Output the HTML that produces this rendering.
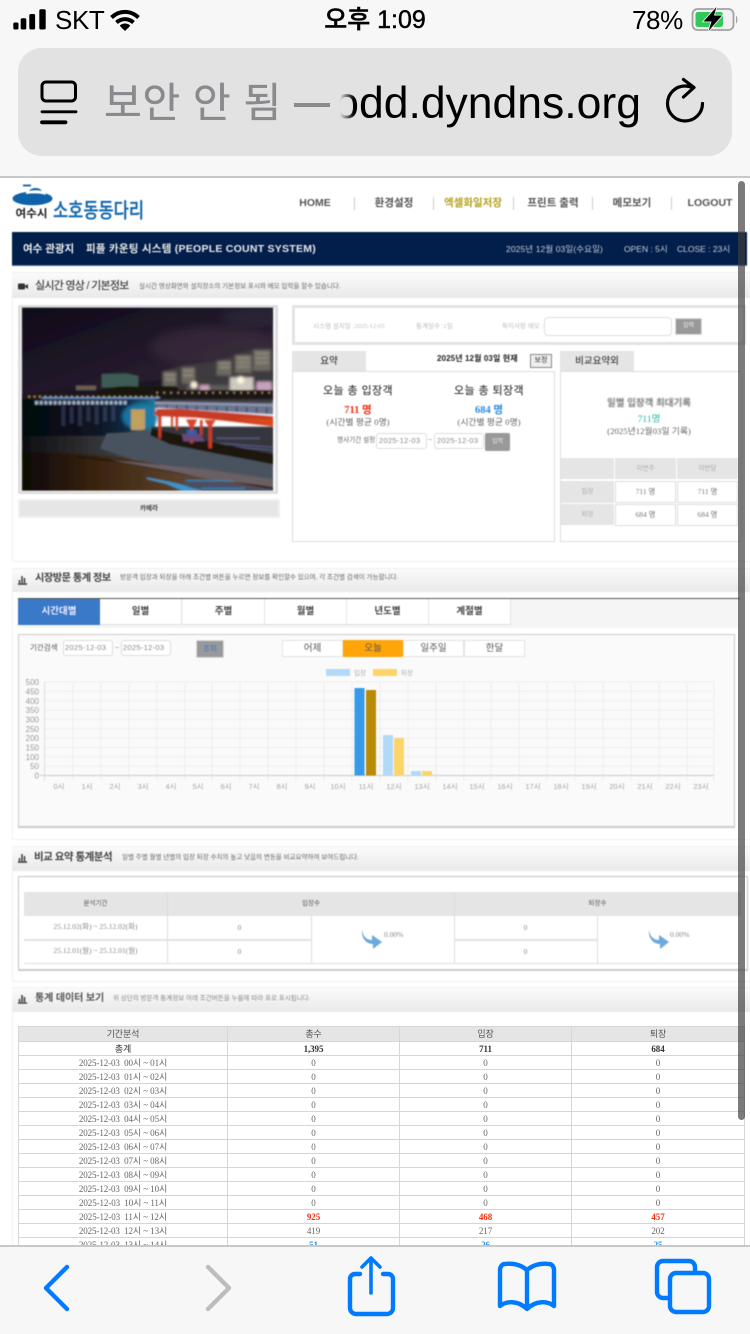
<!DOCTYPE html>
<html lang="ko"><head><meta charset="utf-8"><title>소호동동다리</title>
<style>
*{box-sizing:border-box}
html,body{margin:0;padding:0;width:750px;height:1334px;overflow:hidden;background:#fff}
body{position:relative;font-family:"Liberation Sans","Noto Sans CJK KR",sans-serif}
.a{position:absolute;white-space:nowrap}
.c{text-align:center}
.s{font-family:"Liberation Serif","Noto Sans CJK KR",serif}
#page{position:absolute;left:0;top:178px;width:750px;height:1067px;overflow:hidden;filter:blur(.4px)}
#in{position:absolute;left:0;top:-178px;width:750px;height:1334px}
.nav{top:197px;font-size:10.5px;font-weight:700;color:#555;line-height:13px;width:80px;text-align:center}
.sep{top:197px;width:1px;height:13px;background:#ccc}
.sec{left:12px;width:738px;border:1px solid #f0f0f0;border-right:0}
.hd{left:12px;width:738px;background:linear-gradient(#fbfbfb,#e9e9e9)}
.t{font-size:10.5px;font-weight:700;color:#444;line-height:14px;letter-spacing:-.5px}
.d{font-size:6.5px;color:#666;line-height:10px}
.inp{background:#fff;border:1px solid #ddd;border-radius:3px;font-size:7.5px;color:#888;line-height:13px;padding-left:2px;letter-spacing:.3px}
.g{background:#e5e5e5}
.tab{top:599px;width:82px;height:26px;background:#fff;border-right:1px solid #e3e3e3;border-bottom:1px solid #ddd;font-size:9.5px;font-weight:700;color:#444;line-height:25px;text-align:center}
.seg{top:640px;height:17px;font-size:9.5px;color:#555;line-height:16px;text-align:center;background:#fff;border:1px solid #e3e3e3}
table{border-collapse:collapse;table-layout:fixed}
#dt{position:absolute;left:18px;top:1026px;width:726px;font-family:"Liberation Serif","Noto Sans CJK KR",serif;font-size:9px;letter-spacing:-.1px;color:#666;filter:blur(.2px)}
#dt td{height:14px;padding:0;border:1px solid #d6d6d6;text-align:center;line-height:12px;overflow:hidden;white-space:nowrap}
#dt tr.h td{height:15px;background:#e5e5e5;font-size:9px;color:#555;font-family:"Liberation Sans","Noto Sans CJK KR",sans-serif}
#dt .r{color:#f03010;font-weight:700}
#dt .b{color:#2a8ade;font-weight:700}
.cell{border:1px solid #ddd;background:#fff;font-size:7.5px;color:#777;text-align:center}
</style></head><body>

<div id="page"><div id="in">
<!-- logo -->
<svg class="a" style="left:10px;top:182px" width="140" height="40" viewBox="0 0 140 40">
<ellipse cx="22.500" cy="16.500" rx="20" ry="6.800" fill="#0d62a8"/>
<path d="M16 12c0-4 6-7 11-6 4 1 8 4 9 7-6-2-13-2-20-1z" fill="#fff"/>
<path d="M19 9c3-4 10-4 13 0-4-1-9-1-13 0z" fill="#0d62a8"/>
<path d="M13 3.500h8" stroke="#0d62a8" stroke-width="1.800"/>
<text x="5.500" y="35" font-size="11" font-weight="700" fill="#222" font-family="Liberation Sans,Noto Sans CJK KR,sans-serif" textLength="32" lengthAdjust="spacingAndGlyphs">여수시</text>
<text x="43" y="35.500" font-size="20.500" font-weight="500" fill="#1268ae" stroke="#1268ae" stroke-width=".3" font-family="Liberation Sans,Noto Sans CJK KR,sans-serif" textLength="91" lengthAdjust="spacingAndGlyphs">소호동동다리</text>
</svg>
<div class="a nav" style="left:275px">HOME</div>
<div class="a nav" style="left:354px">환경설정</div>
<div class="a nav" style="left:433px;color:#b5a01e">엑셀화일저장</div>
<div class="a nav" style="left:513px">프린트 출력</div>
<div class="a nav" style="left:592px">메모보기</div>
<div class="a nav" style="left:670px">LOGOUT</div>
<div class="a sep" style="left:354px"></div><div class="a sep" style="left:433px"></div><div class="a sep" style="left:513px"></div><div class="a sep" style="left:592px"></div><div class="a sep" style="left:671px"></div>

<!-- banner -->
<div class="a" style="left:12px;top:232px;width:735px;height:34px;background:#021f4c;border-bottom:1px solid #5a7090"></div>
<div class="a" style="left:23px;top:242px;font-size:10.5px;font-weight:700;color:#f0f0f0;line-height:14px">여수 관광지</div>
<div class="a" style="left:86px;top:242px;font-size:10.5px;font-weight:700;color:#e8e8e8;line-height:14px;letter-spacing:.25px">피플 카운팅 시스템 (PEOPLE COUNT SYSTEM)</div>
<div class="a" style="left:506px;top:243px;font-size:8.500px;color:#c8ccd4;line-height:12px;letter-spacing:.1px">2025년 12월 03일(수요일)</div>
<div class="a" style="left:624px;top:243px;font-size:8.500px;color:#c8ccd4;line-height:12px">OPEN : 5시</div>
<div class="a" style="left:677px;top:243px;font-size:8.500px;color:#c8ccd4;line-height:12px">CLOSE : 23시</div>

<!-- section 1 -->
<div class="a sec" style="top:272px;height:290px"></div>
<div class="a hd" style="top:273px;height:25px"></div>
<svg class="a" style="left:18px;top:283px" width="10" height="7"><rect width="7" height="6" y=".5" rx="1" fill="#333"/><path d="M7 3l3-2v5l-3-2z" fill="#333"/></svg>
<div class="a t" style="left:35px;top:279px;font-weight:500;font-size:11px;letter-spacing:-.75px">실시간 영상 / 기본정보</div>
<div class="a d" style="left:139px;top:282px">실시간 영상화면와 설치장소의 기본정보 표시와 메모 입력을 할수 있습니다.</div>

<div class="a" style="left:18px;top:305px;width:260px;height:189px;border:3px solid #dedede;background:#fff"></div>
<svg class="a" style="left:0;top:270px" width="375" height="290" viewBox="0 0 1125 870">
<defs>
<linearGradient id="sky" x1="0" y1="0" x2="1" y2="1"><stop offset="0" stop-color="#0e0a18"/><stop offset=".55" stop-color="#241a2c"/><stop offset="1" stop-color="#3a2e3a"/></linearGradient>
<linearGradient id="sea" x1="0" y1="0" x2="1" y2="0"><stop offset="0" stop-color="#04060c"/><stop offset=".55" stop-color="#0a1422"/><stop offset=".8" stop-color="#0e2c44"/><stop offset="1" stop-color="#1e7aa0"/></linearGradient>
<linearGradient id="fore" x1="0" y1="0" x2="1" y2="0"><stop offset="0" stop-color="#0c0705"/><stop offset=".3" stop-color="#3a2410"/><stop offset=".6" stop-color="#5a3e28"/><stop offset="1" stop-color="#6a5650"/></linearGradient>
<linearGradient id="gv" x1="0" y1="0" x2="1" y2="0"><stop offset="0" stop-color="#0c0d10"/><stop offset=".45" stop-color="#2c2c2e"/><stop offset="1" stop-color="#4a525e"/></linearGradient>
<clipPath id="cp"><rect x="65" y="112" width="755" height="550"/></clipPath>
<filter id="b1"><feGaussianBlur stdDeviation="2"/></filter>
<filter id="b2"><feGaussianBlur stdDeviation="14"/></filter>
<filter id="b3"><feGaussianBlur stdDeviation="5"/></filter>
<filter id="b4"><feGaussianBlur stdDeviation="3"/></filter>
</defs>
<g clip-path="url(#cp)"><g filter="url(#b1)">
<rect x="65" y="112" width="755" height="280" fill="url(#sky)"/>
<ellipse cx="640" cy="230" rx="190" ry="60" fill="#4a3b48" opacity=".4" filter="url(#b2)"/>
<ellipse cx="770" cy="140" rx="110" ry="26" fill="#38384a" opacity=".4" filter="url(#b2)"/>
<path d="M65 372l110-14 60-10 70 12 110-24 80-8 70 0v80H65z" fill="#1a1820"/>
<rect x="228" y="347" width="60" height="13" fill="#6c5e56"/>
<g filter="url(#b4)">
<path d="M485 305l60-18 100-12 60-20 60-20h55v170H485z" fill="#3e3a3c"/>
<path d="M650 272h44v44h-44zM705 255h50v54h-50zM760 240h52v62h-52zM490 305h40v44h-40zM545 292h40v48h-40z" fill="#6e6a64"/>
<path d="M660 280h30M660 292h30M712 264h38M712 277h38M712 290h38M768 250h40M768 264h40M768 278h40M495 315h30M495 328h30M550 302h30M550 316h30" stroke="#ded4b0" stroke-width="3" stroke-dasharray="4 4"/>
<path d="M560 345h260v40H560z" fill="#5e5a5a"/>
<rect x="690" y="322" width="70" height="46" fill="#cfc8c0"/><circle cx="722" cy="330" r="11" fill="#fff8e0"/><circle cx="582" cy="345" r="10" fill="#fff2dc"/>
<path d="M600 345h28v30h-28zM770 335h45v30h-45z" fill="#c8a0bc"/>
</g>
<path d="M305 312l75-2 35 8v34h-110z" fill="#3e5c56"/>
<path d="M280 376c30-26 90-30 130-26s80-4 120 0l30 36H280z" fill="#15150e"/>
<path d="M450 360h370v28H450z" fill="#1c1812"/>
<path d="M470 368h350" stroke="#f0d080" stroke-width="5" stroke-dasharray="3 18"/>
<rect x="65" y="388" width="400" height="125" fill="url(#sea)"/>
<path d="M85 380h395" stroke="#e8b848" stroke-width="4" stroke-dasharray="5 11"/>
<path d="M125 384h355" stroke="#6a94d4" stroke-width="5"/>
<path d="M105 398h280" stroke="#c0d4f0" stroke-width="11" stroke-dasharray="9 5" opacity=".85"/>
<path d="M190 408v60M215 410v50M240 408v60M265 410v45M290 408v55M315 410v45M340 408v45" stroke="#57547a" stroke-width="12" opacity=".45"/>
<ellipse cx="420" cy="440" rx="55" ry="40" fill="#1f7fae" filter="url(#b3)" opacity=".85"/>
<rect x="393" y="418" width="42" height="62" fill="#bfa05c"/>
<rect x="65" y="498" width="400" height="70" fill="url(#gv)"/>
<path d="M455 470h365v120H455z" fill="#36363c"/>
<path d="M640 520l180 12v8l-180-14zM650 505h130" stroke="#6a70a0" stroke-width="4" opacity=".7"/>
<path d="M455 475l-5 20 60 28 150 30 160 30v-30l-170-34-135-30z" fill="#1c130c"/>
<path d="M320 490c50 0 90-5 125-15l5 20 60 28 150 30 160 30v62l-280-40-150-40-90-30z" fill="#4a525e"/>
<path d="M65 545c100 5 200 5 280 15s170 30 240 50l235 30v25H65z" fill="url(#fore)"/>
<path d="M230 560l130 15 160 30 300 50" stroke="#1a1410" stroke-width="5" fill="none"/>
<path d="M330 570l190 35 120 25 180 20v-22l-200-30z" fill="#6a5f64"/>
<path d="M550 625l270 32v8H560z" fill="#4a5060"/>
<path d="M440 622c50 10 90 15 130 30l40 10-60 2-50-22-60-15z" fill="#3b96cc"/>
<path d="M560 632h140M605 655h130" stroke="#2c84bc" stroke-width="4"/>
<path d="M465 393l355 6v34l-355-20z" fill="#6c7490"/>
<path d="M465 399l355 7" stroke="#c8d0e0" stroke-width="3" opacity=".7"/>
<path d="M470 405v10M500 405v10M530 406v12M560 406v14M590 408v14M620 408v14M650 410v14M680 410v16M710 410v16M740 412v16M770 412v18M800 412v18" stroke="#2a2c40" stroke-width="3"/>
<path d="M470 414l350 20" stroke="#c8ccda" stroke-width="2.500" opacity=".8"/>
<path d="M470 417h70l280 22v30l-230-26-120-5z" fill="#c73a20"/>
<path d="M700 445l120 2v20z" fill="#d84a1c"/>
<path d="M462 425h20v8h-20zM475 433h9v72h-9zM513 435h6v35h-6zM527 435h7v45h-7zM570 450h10v70h-10zM600 450h8v45h-8zM625 450h11v85h-11z" fill="#c93a24"/>
<path d="M558 448h34l-10 20h-14zM613 450h34l-10 16h-14z" fill="#d8442a"/>
<path d="M545 492h55l15 22h-65z" fill="#6a4a7a"/>
<path d="M560 480h30v12h-30z" fill="#2a60b0"/>
</g></g></svg>
<div class="a c" style="left:18px;top:499px;width:262px;height:19px;background:#e6e6e6;border:2px solid #f0f0f0;font-size:6.500px;font-weight:700;color:#444;line-height:15px">카메라</div>

<div class="a" style="left:292px;top:305px;width:454px;height:40px;border:3px solid #e3e3e3"></div>
<div class="a" style="left:313px;top:322px;font-size:6.500px;color:#bbb;line-height:10px">시스템 설치일 :<span class="s">2025-12-03</span></div>
<div class="a" style="left:416px;top:322px;font-size:6.500px;color:#bbb;line-height:10px">통계일수 :<span class="s">1일</span></div>
<div class="a" style="left:502px;top:322px;font-size:6.500px;color:#bbb;line-height:10px">특이사항 메모 :</div>
<div class="a" style="left:544px;top:317px;width:128px;height:19px;border:1px solid #ddd;border-radius:4px;background:#fff"></div>
<div class="a c" style="left:675px;top:318px;width:27px;height:17px;background:#999;border:1px solid #ddd;font-size:6px;color:#f0f0f0;line-height:15px">입력</div>

<div class="a c g" style="left:292px;top:351px;width:74px;height:21px;font-size:9.500px;color:#444;line-height:21px;font-weight:500">요약</div>
<div class="a" style="left:292px;top:371px;width:263px;height:171px;border:1px solid #ddd"></div>
<div class="a" style="left:437px;top:353px;font-size:8px;font-weight:700;color:#222;line-height:11px;letter-spacing:.1px">2025년 12월 03일 현재</div>
<div class="a c" style="left:530px;top:354px;width:22px;height:14px;background:#eee;border:1px solid #888;font-size:7px;color:#333;line-height:11px">보정</div>
<div class="a" style="left:323px;top:384px;font-size:11px;font-weight:500;color:#444;line-height:15px;letter-spacing:.4px">오늘 총 입장객</div>
<div class="a" style="left:454px;top:384px;font-size:11px;font-weight:500;color:#444;line-height:15px;letter-spacing:.4px">오늘 총 퇴장객</div>
<div class="a c s" style="left:308px;top:404px;width:100px;font-size:10.500px;font-weight:700;color:#f03010;line-height:13px">711 명</div>
<div class="a c s" style="left:439px;top:404px;width:100px;font-size:10.500px;font-weight:700;color:#2a8ade;line-height:13px">684 명</div>
<div class="a c s" style="left:308px;top:416px;width:100px;font-size:8.800px;color:#666;line-height:12px">(시간별 평균 0명)</div>
<div class="a c s" style="left:439px;top:416px;width:100px;font-size:8.800px;color:#666;line-height:12px">(시간별 평균 0명)</div>
<div class="a" style="left:337px;top:436px;font-size:6.600px;color:#666;line-height:10px">행사기간 설정</div>
<div class="a inp" style="left:376px;top:433px;width:51px;height:16px">2025-12-03</div>
<div class="a" style="left:428px;top:436px;font-size:7px;color:#888;line-height:10px">~</div>
<div class="a inp" style="left:434px;top:433px;width:50px;height:16px">2025-12-03</div>
<div class="a c" style="left:485px;top:433px;width:25px;height:18px;background:#999;border-radius:2px;font-size:6px;color:#eee;line-height:18px">입력</div>

<div class="a c g" style="left:560px;top:351px;width:74px;height:21px;font-size:9.500px;color:#444;line-height:21px;font-weight:500">비교요약외</div>
<div class="a" style="left:560px;top:371px;width:182px;height:171px;border:1px solid #ddd"></div>
<div class="a c" style="left:589px;top:397px;width:120px;font-size:9.500px;font-weight:700;color:#777;line-height:13px;filter:blur(.5px)">일별 입장객 최대기록</div>
<div class="a c s" style="left:589px;top:414px;width:120px;font-size:9.500px;color:#2bb5a5;line-height:12px">711명</div>
<div class="a c s" style="left:569px;top:425px;width:160px;font-size:8.800px;color:#666;line-height:12px">(2025년12월03일 기록)</div>
<div class="a g" style="left:561px;top:458px;width:53px;height:21px"></div>
<div class="a c g" style="left:615px;top:458px;width:61px;height:21px;font-size:6.500px;color:#aaa;line-height:21px">이번주</div>
<div class="a c g" style="left:677px;top:458px;width:61px;height:21px;font-size:6.500px;color:#aaa;line-height:21px">이번달</div>
<div class="a c g" style="left:561px;top:481px;width:53px;height:22px;font-size:6.500px;color:#aaa;line-height:21px">입장</div>
<div class="a c g" style="left:561px;top:504px;width:53px;height:21px;font-size:6.500px;color:#aaa;line-height:21px">퇴장</div>
<div class="a cell s" style="left:615px;top:481px;width:61px;height:22px;line-height:19px">711 명</div>
<div class="a cell s" style="left:677px;top:481px;width:61px;height:22px;line-height:19px">711 명</div>
<div class="a cell s" style="left:615px;top:504px;width:61px;height:22px;line-height:19px">684 명</div>
<div class="a cell s" style="left:677px;top:504px;width:61px;height:22px;line-height:19px">684 명</div>

<!-- section 2 -->
<div class="a sec" style="top:568px;height:272px"></div>
<div class="a hd" style="top:569px;height:23px"></div>
<svg class="a" style="left:18px;top:575px" width="10" height="10"><path d="M0 9h9M1.500 8V5M4 8V1M6.500 8V3" stroke="#333" stroke-width="1.400"/></svg>
<div class="a t" style="left:35px;top:572px;font-size:10.200px">시장방문 통계 정보</div>
<div class="a d" style="left:120px;top:573px">방문객 입장과 퇴장을 아래 조건별 버튼을 누르면 정보를 확인할수 있으며, 각 조건별 검색이 가능합니다.</div>
<div class="a" style="left:18px;top:598px;width:722px;height:30px;background:#f5f5f5;border-top:1px solid #555"></div>
<div class="a tab" style="left:18px;background:#3a78c8;color:#eef;border:0">시간대별</div>
<div class="a tab" style="left:100px">일별</div>
<div class="a tab" style="left:183px">주별</div>
<div class="a tab" style="left:265px">월별</div>
<div class="a tab" style="left:347px">년도별</div>
<div class="a tab" style="left:429px">계절별</div>

<div class="a" style="left:18px;top:634px;width:717px;height:194px;background:#fafafa;border:1px solid #ccc;border-bottom:2px solid #ccc"></div>
<div class="a" style="left:30px;top:642px;font-size:7.500px;color:#555;line-height:12px">기간검색</div>
<div class="a inp" style="left:63px;top:640px;width:50px;height:16px;font-size:7.500px;padding-left:1px">2025-12-03</div>
<div class="a" style="left:115px;top:644px;font-size:7px;color:#888;line-height:10px">~</div>
<div class="a inp" style="left:121px;top:640px;width:50px;height:16px;font-size:7.500px;padding-left:1px">2025-12-03</div>
<div class="a c" style="left:196px;top:640px;width:28px;height:18px;background:#999;border:1px solid #ddd;font-size:7.500px;color:#3a78c8;line-height:16px">조회</div>
<div class="a seg" style="left:282px;width:61px">어제</div>
<div class="a seg" style="left:343px;width:60px;background:#ffa507;border-color:#ffa507">오늘</div>
<div class="a seg" style="left:403px;width:61px">일주일</div>
<div class="a seg" style="left:464px;width:61px">한달</div>

<svg class="a" style="left:0;top:660px" width="750" height="140" viewBox="0 660 750 140" font-family="Liberation Sans,Noto Sans CJK KR,sans-serif">
<rect x="326" y="669" width="24" height="7" fill="#b3d9f9"/><rect x="373" y="669" width="24" height="7" fill="#fdd46a"/>
<text x="354" y="675" font-size="6.500" fill="#aaa">입장</text><text x="401" y="675" font-size="6.500" fill="#aaa">퇴장</text>
<path d="M44.500 682H714M44.500 691.400H714M44.500 700.700H714M44.500 710.100H714M44.500 719.400H714M44.500 728.800H714M44.500 738.100H714M44.500 747.500H714M44.500 756.800H714M44.500 766.200H714" stroke="#eeeeee"/>
<path d="M73 682V781M101 682V781M129 682V781M157 682V781M185 682V781M212 682V781M240 682V781M268 682V781M296 682V781M324 682V781M352 682V781M380 682V781M408 682V781M436 682V781M464 682V781M491 682V781M519 682V781M547 682V781M575 682V781M603 682V781M631 682V781M659 682V781M687 682V781M714 682V781" stroke="#eeeeee"/>
<path d="M44.500 682V781" stroke="#e0e0e0"/><path d="M40 775.500H714" stroke="#d8d8d8" stroke-width="1.400"/>
<rect x="354.500" y="688" width="10" height="87.500" fill="#379ae9"/><rect x="366" y="690" width="10" height="85.500" fill="#b98a08"/>
<rect x="383" y="735" width="10" height="40.500" fill="#b3d9f9"/><rect x="394" y="738" width="10" height="37.500" fill="#fdd46a"/>
<rect x="411" y="771" width="10" height="4.500" fill="#b3d9f9"/><rect x="422" y="771" width="10" height="4.500" fill="#fdd46a"/>
<g font-size="8" fill="#999" text-anchor="end"><text x="39" y="685">500</text><text x="39" y="694.500">450</text><text x="39" y="704">400</text><text x="39" y="713">350</text><text x="39" y="722.500">300</text><text x="39" y="732">250</text><text x="39" y="741">200</text><text x="39" y="750.500">150</text><text x="39" y="760">100</text><text x="39" y="769">50</text><text x="39" y="778.500">0</text></g>
<g font-size="7.500" fill="#a4a4a4" text-anchor="middle"><text x="59" y="789">0시</text><text x="87" y="789">1시</text><text x="115" y="789">2시</text><text x="143" y="789">3시</text><text x="171" y="789">4시</text><text x="198" y="789">5시</text><text x="226" y="789">6시</text><text x="254" y="789">7시</text><text x="282" y="789">8시</text><text x="310" y="789">9시</text><text x="338" y="789">10시</text><text x="366" y="789">11시</text><text x="394" y="789">12시</text><text x="422" y="789">13시</text><text x="450" y="789">14시</text><text x="477" y="789">15시</text><text x="505" y="789">16시</text><text x="533" y="789">17시</text><text x="561" y="789">18시</text><text x="589" y="789">19시</text><text x="617" y="789">20시</text><text x="645" y="789">21시</text><text x="673" y="789">22시</text><text x="701" y="789">23시</text></g>
</svg>

<!-- section 3 -->
<div class="a sec" style="top:846px;height:136px"></div>
<div class="a hd" style="top:847px;height:24px"></div>
<svg class="a" style="left:18px;top:853px" width="10" height="10"><path d="M0 9h9M1.500 8V5M4 8V1M6.500 8V3" stroke="#333" stroke-width="1.400"/></svg>
<div class="a t" style="left:34px;top:850px;font-size:10.500px">비교 요약 통계분석</div>
<div class="a d" style="left:122px;top:853px">일별 주별 월별 년별의 입장 퇴장 수치의 높고 낮음의 변동을 비교요약하여 보여드립니다.</div>
<div class="a" style="left:18px;top:876px;width:730px;height:95px;border:1px solid #c4c4c4;border-bottom:2px solid #ccc;background:#fff"></div>
<div class="a g c" style="left:24px;top:892px;width:717px;height:24px"></div>
<div class="a c" style="left:24px;top:899px;width:143px;font-size:6.500px;color:#555;line-height:10px">분석기간</div>
<div class="a c" style="left:168px;top:899px;width:286px;font-size:6.500px;color:#555;line-height:10px">입장수</div>
<div class="a c" style="left:454px;top:899px;width:287px;font-size:6.500px;color:#555;line-height:10px">퇴장수</div>
<div class="a" style="left:167px;top:892px;width:1px;height:72px;background:#ddd"></div>
<div class="a" style="left:454px;top:892px;width:1px;height:72px;background:#ddd"></div>
<div class="a" style="left:311px;top:916px;width:1px;height:48px;background:#ddd"></div>
<div class="a" style="left:597px;top:916px;width:1px;height:48px;background:#ddd"></div>
<div class="a" style="left:24px;top:939px;width:287px;height:2px;background:#e2e2e2"></div>
<div class="a" style="left:454px;top:939px;width:144px;height:2px;background:#e2e2e2"></div>
<div class="a" style="left:24px;top:963px;width:717px;height:1px;background:#ddd"></div>
<div class="a c s" style="left:24px;top:922px;width:143px;font-size:7.500px;color:#888;line-height:10px">25.12.02(화) ~ 25.12.02(화)</div>
<div class="a c s" style="left:24px;top:946px;width:143px;font-size:7.500px;color:#888;line-height:10px">25.12.01(월) ~ 25.12.01(월)</div>
<div class="a c s" style="left:168px;top:923px;width:143px;font-size:7.500px;color:#888;line-height:10px">0</div>
<div class="a c s" style="left:168px;top:947px;width:143px;font-size:7.500px;color:#888;line-height:10px">0</div>
<div class="a c s" style="left:454px;top:923px;width:143px;font-size:7.500px;color:#888;line-height:10px">0</div>
<div class="a c s" style="left:454px;top:947px;width:143px;font-size:7.500px;color:#888;line-height:10px">0</div>
<svg class="a" style="left:361px;top:929px" width="22" height="20"><path d="M1 1c1 7 5 10 10 10V6l10 7-9 7v-5C6 15 0 10 1 1z" fill="#6ca9dd"/></svg>
<svg class="a" style="left:648px;top:929px" width="22" height="20"><path d="M1 1c1 7 5 10 10 10V6l10 7-9 7v-5C6 15 0 10 1 1z" fill="#6ca9dd"/></svg>
<div class="a s" style="left:384px;top:930px;font-size:7.500px;color:#888;line-height:10px">0.00%</div>
<div class="a s" style="left:670px;top:930px;font-size:7.500px;color:#888;line-height:10px">0.00%</div>

<!-- section 4 -->
<div class="a sec" style="top:987px;height:270px"></div>
<div class="a hd" style="top:988px;height:24px"></div>
<svg class="a" style="left:18px;top:994px" width="10" height="10"><path d="M0 9h9M1.500 8V5M4 8V1M6.500 8V3" stroke="#444" stroke-width="1.600"/></svg>
<div class="a t" style="left:35px;top:992px;font-size:10px;color:#555;letter-spacing:-.1px;filter:blur(.3px)">통계 데이터 보기</div>
<div class="a d" style="left:113px;top:994px;color:#888">위 상단의 방문객 통계정보 아래 조건버튼을 누름에 따라 표로 표시됩니다.</div>
</div></div>

<table id="dt">
<colgroup><col style="width:209px"><col style="width:172px"><col style="width:172px"><col style="width:173px"></colgroup>
<tr class="h"><td>기간분석</td><td>총수</td><td>입장</td><td>퇴장</td></tr>
<tr><td style="color:#333;font-family:'Liberation Sans','Noto Sans CJK KR',sans-serif">총계</td><td style="color:#333;font-weight:700">1,395</td><td style="color:#333;font-weight:700">711</td><td style="color:#333;font-weight:700">684</td></tr>
<tr><td>2025-12-03 &nbsp;00시 ~ 01시</td><td>0</td><td>0</td><td>0</td></tr>
<tr><td>2025-12-03 &nbsp;01시 ~ 02시</td><td>0</td><td>0</td><td>0</td></tr>
<tr><td>2025-12-03 &nbsp;02시 ~ 03시</td><td>0</td><td>0</td><td>0</td></tr>
<tr><td>2025-12-03 &nbsp;03시 ~ 04시</td><td>0</td><td>0</td><td>0</td></tr>
<tr><td>2025-12-03 &nbsp;04시 ~ 05시</td><td>0</td><td>0</td><td>0</td></tr>
<tr><td>2025-12-03 &nbsp;05시 ~ 06시</td><td>0</td><td>0</td><td>0</td></tr>
<tr><td>2025-12-03 &nbsp;06시 ~ 07시</td><td>0</td><td>0</td><td>0</td></tr>
<tr><td>2025-12-03 &nbsp;07시 ~ 08시</td><td>0</td><td>0</td><td>0</td></tr>
<tr><td>2025-12-03 &nbsp;08시 ~ 09시</td><td>0</td><td>0</td><td>0</td></tr>
<tr><td>2025-12-03 &nbsp;09시 ~ 10시</td><td>0</td><td>0</td><td>0</td></tr>
<tr><td>2025-12-03 &nbsp;10시 ~ 11시</td><td>0</td><td>0</td><td>0</td></tr>
<tr><td>2025-12-03 &nbsp;11시 ~ 12시</td><td class="r">925</td><td class="r">468</td><td class="r">457</td></tr>
<tr><td>2025-12-03 &nbsp;12시 ~ 13시</td><td>419</td><td>217</td><td>202</td></tr>
<tr><td>2025-12-03 &nbsp;13시 ~ 14시</td><td class="b">51</td><td class="b">26</td><td class="b">25</td></tr>
</table>

<!-- scrollbar -->
<div class="a" style="left:738px;top:181px;width:7px;height:939px;border-radius:4px;background:rgba(60,60,60,.68)"></div>

<!-- top chrome -->
<div class="a" style="left:0;top:0;width:750px;height:178px;background:#f7f7f7;border-bottom:2px solid #c8c8c8"></div>
<div class="a" style="left:738px;top:178px;width:7px;height:10px;background:rgba(60,60,60,0)"></div>
<svg class="a" style="left:0;top:0" width="50" height="34"><rect x="13.300" y="22.500" width="5.200" height="7" rx="1.500" fill="#000"/><rect x="20.700" y="18.300" width="5.600" height="11.200" rx="1.500" fill="#000"/><rect x="29.300" y="14" width="5.800" height="15.500" rx="1.500" fill="#000"/><rect x="39.300" y="9.300" width="6.400" height="20.200" rx="1.500" fill="#000"/></svg>
<div class="a" style="left:55px;top:5px;font-size:26px;color:#000;line-height:30px;letter-spacing:-.4px">SKT</div>
<svg class="a" style="left:109px;top:8px" width="32" height="24" viewBox="0 0 32 24" fill="none" stroke="#000" stroke-width="4"><path d="M2.500 9.500c8-7.500 19-7.500 27 0M7.500 14.500c5-4.500 12-4.500 17 0M12 19c2.500-2 5.500-2 8 0"/><path d="M11.500 18.500L16 23l4.500-4.500z" fill="#000" stroke="none"/></svg>
<div class="a c" style="left:275px;top:5px;width:200px;font-size:25px;font-weight:500;color:#000;line-height:30px;-webkit-text-stroke:.45px #000">오후 1:09</div>
<div class="a" style="left:632px;top:5px;font-size:26px;color:#000;line-height:30px;letter-spacing:-.4px">78%</div>
<svg class="a" style="left:0;top:0" width="750" height="34" viewBox="0 0 750 34">
<rect x="692.500" y="9" width="41" height="21" rx="5" fill="#f2f2f2" stroke="#a2a2a2" stroke-width="1.800"/>
<rect x="695.500" y="12" width="27.500" height="15" rx="2.500" fill="#34c759"/>
<path d="M736 15.500c1.800.8 1.800 7.200 0 8z" fill="#a2a2a2"/>
<path d="M716.500 7L703.500 21.500h8l-3 9.500 13.500-15.500h-8z" fill="#000" stroke="#f7f7f7" stroke-width="1.600" paint-order="stroke"/>
</svg>

<div class="a" style="left:18px;top:48px;width:714px;height:108px;background:#e2e2e2;border-radius:24px"></div>
<svg class="a" style="left:0;top:70px" width="110" height="60" viewBox="0 70 110 60" fill="none" stroke="#000" stroke-linecap="round"><rect x="42" y="82" width="33.500" height="19" rx="4" stroke-width="3"/><path d="M42 111.800h34" stroke-width="2.800"/><path d="M42 122.300h23.500" stroke-width="3.800"/></svg>
<div class="a" style="left:104px;top:75px;font-size:41px;color:#8a8a8e;line-height:56px;letter-spacing:.7px;-webkit-text-stroke:.35px #8a8a8e">보안 안 됨</div>
<div class="a" style="left:294px;top:103px;width:36px;height:3.500px;background:#8a8a8e"></div>
<div class="a" style="left:336px;top:70px;width:310px;height:70px;overflow:hidden;-webkit-mask-image:linear-gradient(90deg,transparent 4px,#000 18px)">
<div class="a" style="right:5px;top:5px;font-size:44.500px;color:#000;line-height:58px">odd.dyndns.org</div></div>
<svg class="a" style="left:660px;top:74px" width="50" height="52" viewBox="660 74 50 52" fill="none" stroke="#000" stroke-width="3.200" stroke-linecap="round" stroke-linejoin="round"><path d="M692 87.500c-2-1-4.500-1.500-7-1.500a17.500 17.500 0 1 0 17.500 17.500"/><path d="M683.500 79.500l10.500 8-10.500 9.500"/></svg>

<!-- bottom toolbar -->
<div class="a" style="left:0;top:1245px;width:750px;height:89px;background:#f7f7f7;border-top:2px solid #c8c8c8"></div>
<svg class="a" style="left:0;top:1245px" width="750" height="89" viewBox="0 1245 750 89" fill="none" stroke="#007aff" stroke-width="4.400" stroke-linecap="round" stroke-linejoin="round">
<path d="M67 1267L46 1288l21 21"/>
<path d="M208 1267l21 21-21 21" stroke="#bdbdbd"/>
<path d="M360 1274h-5a5 5 0 0 0-5 5v29a6 6 0 0 0 6 6h31a6 6 0 0 0 6-6v-29a5 5 0 0 0-5-5h-5"/>
<path d="M371 1293v-35M362 1267l9-9 9 9" stroke-width="3.600"/>
<path d="M527 1270c-6-5-14-7-22-6-3 0-5 3-5 6v36c6-5 18-6 27 3 9-9 21-8 27-3v-36c0-3-2-6-5-6-8-1-16 1-22 6zM527 1270v39"/>
<path d="M669 1298h-6a6 6 0 0 1-6-6v-25a6 6 0 0 1 6-6h26a6 6 0 0 1 6 6v6"/>
<rect x="670" y="1273" width="39" height="39" rx="6"/>
</svg>
</body></html>
